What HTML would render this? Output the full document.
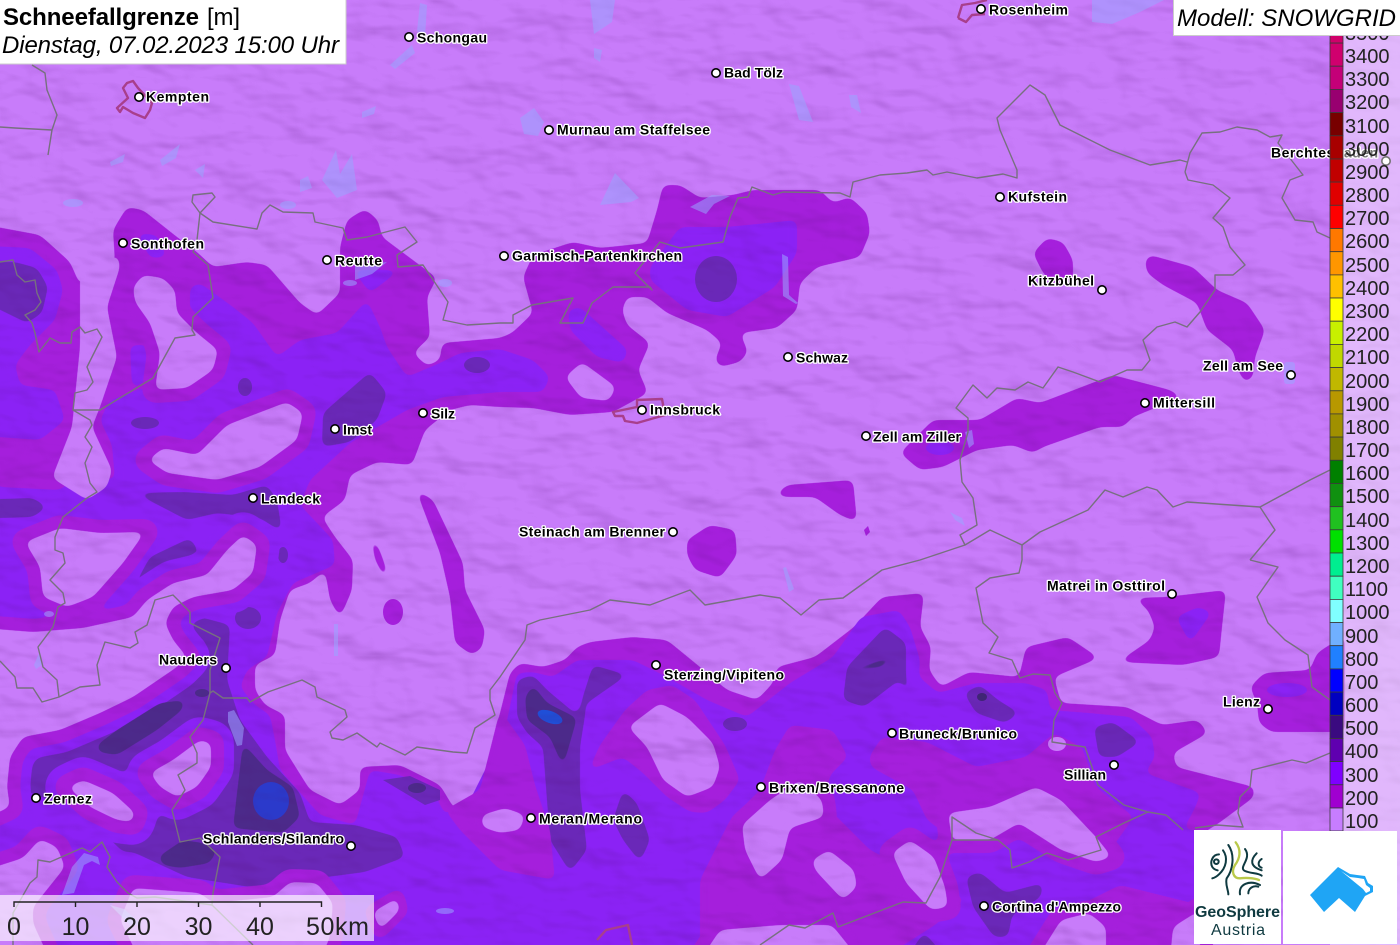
<!DOCTYPE html>
<html lang="de"><head><meta charset="utf-8"><title>Schneefallgrenze</title>
<style>
html,body{margin:0;padding:0;background:#c87cfa}
svg{display:block}
text{font-family:"Liberation Sans",sans-serif}
.l text{font-size:14px;font-weight:bold;fill:#000;stroke:#fff;stroke-width:2.6px;paint-order:stroke;stroke-linejoin:round}
.n text{font-size:20px;fill:#222}
.b{fill:none;stroke:#77707f;stroke-width:1.4;stroke-linejoin:round}
.w{fill:#9aa4ff;opacity:.55}
</style></head><body>
<svg width="1400" height="945" viewBox="0 0 1400 945" xmlns="http://www.w3.org/2000/svg">
<defs>
<filter id="s" filterUnits="userSpaceOnUse" x="-40" y="-40" width="1480" height="1025" color-interpolation-filters="sRGB">
<feGaussianBlur stdDeviation="4"/>
<feComponentTransfer><feFuncA type="linear" slope="14" intercept="-6.5"/></feComponentTransfer>
</filter>
<filter id="h" filterUnits="userSpaceOnUse" x="0" y="0" width="1400" height="945" color-interpolation-filters="sRGB">
<feTurbulence type="fractalNoise" baseFrequency="0.016 0.032" numOctaves="3" seed="7" result="t"/>
<feDiffuseLighting in="t" surfaceScale="5" diffuseConstant="1" lighting-color="#fff"><feDistantLight azimuth="135" elevation="60"/></feDiffuseLighting>
<feColorMatrix values="0 0 0 0 .3 0 0 0 0 .05 0 0 0 0 .42 -.6 0 0 0 .535"/>
</filter>
<polygon id="tongue" points="80,270 118,255 120,267 107,307 117,357 100,407 92,427 112,470 107,487 87,500 52,478 72,427 80,347"/>
<polygon id="h2" points="133,287 143,275 163,278 175,290 177,313 197,333 218,350 213,370 187,388 155,390 160,353 150,323 135,302"/>
<polygon id="h3" points="148,460 163,448 197,455 227,425 287,402 303,413 297,440 260,467 217,480 167,473"/>
<polygon id="sw" points="-30,627 33,632 83,628 133,617 147,600 173,583 207,575 227,550 243,535 257,545 253,573 233,590 193,597 173,607 165,623 173,640 187,657 177,667 133,697 100,713 60,730 23,737 10,757 7,787 10,807 -30,825"/>
<polygon id="sw2" points="25,542 60,528 100,533 145,532 123,563 93,597 67,607 43,597 40,567"/>
<polygon id="p1" points="150,773 173,760 200,740 211,743 211,767 197,787 177,797 160,787"/>
<polygon id="p2" points="68,787 83,780 113,793 135,813 132,822 117,820 90,807"/>
<polygon id="p3" points="-30,875 23,858 40,839 57,847 65,867 33,907 33,923 50,960 -30,960"/>
<polygon id="p4" points="133,888 200,893 213,903 273,897 290,882 317,883 333,903 330,937 320,960 140,960 120,920"/>
<polygon id="p5" points="373,912 397,898 400,910 380,930"/>
<polygon id="p6" points="482,815 505,808 525,815 520,830 500,833 482,827"/>
<polygon id="p7" points="628,727 660,703 687,717 713,743 720,767 713,787 687,797 663,780 647,747"/>
<polygon id="p8" points="742,825 770,800 800,780 822,800 824,817 790,828 782,860 760,880 745,850"/>
<polygon id="p9" points="948,813 990,807 1036,787 1061,800 1096,837 1112,857 1096,862 1061,850 1019,823 990,840 952,840"/>
<polygon id="p10" points="892,853 910,840 934,857 945,887 948,907 931,910 906,883"/>
<polygon id="p11" points="812,860 829,850 854,870 857,887 843,900 815,870"/>
<polygon id="p12" points="1036,960 1061,920 1089,913 1106,927 1106,960"/>
<polygon id="p13" points="700,960 720,930 780,925 832,925 860,960"/>
<polygon id="p14" points="1170,960 1173,927 1200,910 1200,960"/>
</defs>

<rect width="1400" height="945" fill="#c87cfa"/>

<!-- level 200 -->
<g filter="url(#s)" fill="#a51fdc">
<polygon points="-30,222 40,235 70,262 80,285 115,262 113,230 127,207 143,210 177,237 197,252 213,267 247,262 267,265 300,303 317,315 340,293 340,247 347,220 365,209 378,220 382,237 437,278 427,297 430,337 413,353 427,366 440,360 442,343 500,338 512,333 533,313 523,277 533,255 573,242 600,248 647,243 657,210 663,185 680,185 700,198 733,195 753,190 820,190 833,203 850,197 867,213 870,233 860,257 817,267 800,283 797,310 777,328 740,333 748,352 740,362 720,367 715,360 722,343 707,330 667,313 647,297 627,297 622,310 627,325 650,343 638,370 648,393 613,412 570,415 533,408 500,407 470,405 450,410 425,430 412,465 377,462 350,475 345,500 322,517 335,537 353,560 352,590 340,618 330,600 325,570 310,583 290,590 280,620 275,655 255,665 255,690 265,705 285,715 285,750 310,790 340,805 360,790 360,767 400,765 440,785 455,810 480,790 500,713 510,673 520,663 543,667 565,660 577,647 590,642 633,637 667,640 700,667 727,690 757,700 773,683 777,667 815,657 854,627 882,597 924,593 920,627 931,647 929,670 941,687 969,672 1019,677 1026,647 1068,637 1099,658 1054,677 1061,703 1127,707 1162,725 1198,720 1208,733 1173,753 1176,767 1254,787 1254,797 1219,823 1200,835 1200,960 -30,960"/>
<polygon points="1145,260 1150,255 1193,267 1217,290 1247,303 1265,330 1255,357 1253,377 1245,383 1238,370 1233,350 1207,330 1197,303 1163,285 1147,273"/>
<polygon points="1033,253 1047,238 1063,242 1073,260 1073,280 1057,288 1043,273"/>
<polygon points="900,453 933,420 980,420 1017,398 1040,403 1113,375 1170,390 1182,397 1133,417 1123,427 1100,427 1043,447 1033,453 1013,445 977,450 943,467 920,470"/>
<polygon points="775,495 787,485 853,480 857,522 840,515 815,497 785,497"/>
<polygon points="687,540 710,525 735,530 737,555 720,578 695,570 687,555"/>
<polygon points="413,482 417,490 433,500 463,563 465,590 485,630 482,648 472,655 455,643 450,597 440,553"/>
<polygon points="370,537 378,545 387,570 385,580 375,560"/>
<polygon points="1134,598 1166,597 1226,590 1222,627 1219,657 1183,665 1118,662 1150,640 1155,627 1148,610"/>
<polygon points="1250,687 1264,673 1310,670 1317,653 1345,635 1345,732 1271,732 1259,723 1257,703"/>
</g>
<ellipse cx="393" cy="612" rx="10" ry="13" fill="#a51fdc"/>
<polygon points="864,530 868,526 870,532 866,536" fill="#a51fdc"/>

<!-- level 300 -->
<g filter="url(#s)" fill="#8b22f5">
<polygon points="190,287 200,283 233,307 253,323 277,357 300,340 337,333 367,300 380,327 387,347 407,377 440,363 460,353 500,349 533,360 550,377 543,392 500,392 443,397 407,410 350,443 310,480 300,505 333,540 335,565 293,583 277,613 267,657 247,670 240,687 255,705 270,715 275,740 280,770 320,815 355,825 370,770 400,775 433,790 445,815 470,800 505,730 517,673 533,672 553,677 577,660 633,660 667,677 707,700 747,717 790,683 833,657 861,617 899,610 910,627 920,660 919,677 938,693 976,683 1026,683 1047,690 1050,710 1089,713 1131,717 1152,737 1155,757 1145,773 1201,793 1194,810 1183,830 1200,830 1200,960 -30,960 -30,470 0,487 60,490 80,475 115,480 112,445 100,420 110,400 140,390 160,385 195,380 190,340"/>
<polygon points="-30,245 30,248 57,270 63,290 55,320 30,345 15,365 20,385 55,390 65,420 40,440 -30,435"/>
<polygon points="650,267 680,227 727,227 797,220 797,253 775,287 727,317 687,310 650,280"/>
<polygon points="568,310 580,307 628,350 623,363 597,357 570,330"/>
<polygon points="353,270 400,270 370,293"/>
<polygon points="137,233 157,235 167,257 150,258"/>
<polygon points="130,345 148,345 150,378 132,388"/>
<polygon points="1176,617 1198,607 1212,612 1190,643"/>
</g>
<ellipse cx="1287" cy="690" rx="20" ry="7" fill="#8b22f5"/>
<ellipse cx="940" cy="448" rx="14" ry="7" fill="#8b22f5"/>

<!-- level 400 -->
<g filter="url(#s)" fill="#6a28b8">
<polygon points="-30,262 15,262 37,268 48,287 42,313 27,323 -30,295"/>
<polygon points="135,493 183,492 233,495 267,485 277,500 282,532 260,518 217,513 187,520"/>
<polygon points="-30,500 33,498 47,507 33,517 -30,519"/>
<polygon points="323,413 370,372 387,393 377,420 350,442 322,447"/>
<polygon points="132,590 150,557 190,538 198,550 190,567 140,583"/>
<polygon points="185,625 200,617 230,625 227,680 240,720 267,757 300,793 310,822 355,825 397,837 405,857 365,872 250,887 187,877 133,852 123,852 83,813 23,790 25,767 33,750 97,733 130,715 187,682 200,667 207,643"/>
<polygon points="517,680 533,675 547,690 577,715 593,665 627,675 610,687 587,703 580,747 580,790 587,850 570,872 550,840 543,747 527,733 517,717"/>
<polygon points="613,820 623,790 637,803 650,840 640,862 623,840"/>
<polygon points="843,700 847,667 885,627 906,643 906,677 912,698 899,680 864,707"/>
<polygon points="964,693 980,685 998,700 1019,713 1005,723 976,713"/>
<polygon points="1094,727 1113,722 1140,742 1117,757 1099,757"/>
<polygon points="966,877 980,872 1005,893 1043,883 1041,897 1012,915 1008,937 994,937 973,907"/>
<polygon points="905,960 924,932 948,960"/>
</g>
<ellipse cx="245" cy="387" rx="7" ry="9" fill="#6a28b8"/>
<ellipse cx="145" cy="423" rx="14" ry="6" fill="#6a28b8"/>
<ellipse cx="477" cy="365" rx="13" ry="8" fill="#6a28b8"/>
<ellipse cx="283" cy="555" rx="5" ry="8" fill="#6a28b8"/>
<ellipse cx="248" cy="618" rx="13" ry="11" fill="#6a28b8"/>
<ellipse cx="735" cy="724" rx="12" ry="7" fill="#6a28b8"/>
<ellipse cx="716" cy="279" rx="21" ry="23" fill="#6a28b8"/>

<!-- rings of 300 around holes, over 400 -->
<g filter="url(#s)" fill="#8b22f5" stroke="#8b22f5" stroke-width="46" stroke-linejoin="round">
<use href="#sw"/><use href="#p1"/><use href="#p2"/><use href="#p3"/>
</g>

<!-- level 500 / 600 -->
<g filter="url(#s)" fill="#4c2a8a">
<polygon points="97,745 117,730 160,703 185,700 182,710 157,730 117,755 98,752"/>
<polygon points="158,857 183,840 203,843 217,850 210,863 180,868 163,865"/>
<polygon points="243,743 267,770 293,787 300,817 283,833 233,828 237,793"/>
<polygon points="525,697 533,685 547,703 577,718 563,767 550,737 527,720"/>
<polygon points="847,670 898,655 882,667 854,672"/>
</g>
<ellipse cx="202" cy="693" rx="7" ry="4" fill="#4c2a8a"/>
<ellipse cx="982" cy="697" rx="5" ry="4" fill="#3f2675"/>
<polygon points="383,780 410,776 440,790 440,800 425,805" fill="#6a28b8"/>
<ellipse cx="417" cy="788" rx="9" ry="5" fill="#4c2a8a"/>
<ellipse cx="271" cy="801" rx="18" ry="19" fill="#2b3acb"/>
<ellipse cx="550" cy="717" rx="13" ry="6" fill="#1f4fd8" transform="rotate(20 550 717)"/>

<!-- local 200 zones over 300/400 -->
<g filter="url(#s)" fill="#a51fdc">
<polygon points="869,757 882,737 927,742 976,767 1026,757 1054,733 1082,747 1096,787 1134,817 1096,870 1070,860 1026,787 948,813 945,833 927,820 913,790 871,767"/>
<polygon points="770,800 830,810 870,850 950,890 965,900 935,925 880,960 740,960 730,880"/>
<polygon points="1120,885 1200,905 1200,960 1040,960 1060,915"/>
<polygon points="590,767 600,745 625,710 647,690 672,685 695,700 725,745 740,780 725,800 707,813 690,812 667,797 643,773 623,757 590,770"/>
<polygon points="730,820 760,790 775,750 790,725 833,730 848,757 830,775 825,800 785,830 780,870 800,900 700,960 700,880"/>
<polygon points="500,710 525,745 535,785 550,830 555,880 500,870 460,830 445,810 480,790"/>
<polygon points="14,440 80,470 40,487 -30,480 -30,440"/>
</g>
<g filter="url(#s)" fill="#a51fdc" stroke="#a51fdc" stroke-width="26" stroke-linejoin="round">
<use href="#h2"/><use href="#h3"/><use href="#sw"/><use href="#sw2"/><use href="#p1"/><use href="#p2"/><use href="#p3"/><use href="#p4"/><use href="#p5" stroke-width="16"/><use href="#p6" stroke-width="16"/><use href="#p8"/><use href="#p9"/><use href="#p10"/><use href="#p11"/><use href="#p12"/><use href="#p13"/><use href="#p14"/>
</g>

<!-- uncoloured (below 200) holes -->
<g filter="url(#s)" fill="#c87cfa">
<use href="#tongue"/><use href="#h2"/><use href="#h3"/><use href="#sw"/><use href="#sw2"/>
<use href="#p1"/><use href="#p2"/><use href="#p3"/><use href="#p4"/><use href="#p5"/><use href="#p6"/><use href="#p7"/><use href="#p8"/><use href="#p9"/><use href="#p10"/><use href="#p11"/><use href="#p12"/><use href="#p13"/><use href="#p14"/>
<polygon points="565,377 582,362 616,387 609,401 581,398"/>
</g>
<ellipse cx="1057" cy="744" rx="9" ry="7" fill="#c87cfa"/>

<!-- relief -->
<rect width="1400" height="945" filter="url(#h)"/>

<!-- water -->
<g class="w">
<path d="M590,0h25l-3,22l-18,12z"/><path d="M594,48l8,2l-2,12l-6,-4z"/><path d="M420,3l7,2l-2,32l-8,-6z"/><path d="M390,65l22,-20l3,8l-20,16z"/>
<path d="M520,118l14,-10l10,14l-6,14l-14,-2z"/><path d="M600,205l15,-32l24,25l-8,4z"/><path d="M789,84l10,2l14,36l-14,-2z"/><path d="M849,95h8l4,18l-10,-6z"/>
<path d="M322,180l14,-30l4,24l12,-20l5,36l-20,8z"/><path d="M300,180l8,-4l4,12l-12,4z"/><path d="M160,160l20,-16l-4,14l-14,8z"/><path d="M110,162l15,-8l-2,8l-12,4z"/><path d="M362,112l14,-6l-2,8l-12,4z"/><path d="M195,170l10,-6l-2,14z"/>
<ellipse cx="73" cy="203" rx="10" ry="4"/><ellipse cx="288" cy="205" rx="8" ry="4"/><path d="M355,266l32,-4l-15,12l-17,6z"/><ellipse cx="350" cy="283" rx="7" ry="3"/><ellipse cx="445" cy="283" rx="7" ry="4"/>
<path d="M690,207l22,-12l18,1l-16,8l-8,10z"/><path d="M782,254l6,3l1,38l9,8l-2,1l-13,-8z"/>
<path d="M1092,0h72l-24,12l-28,12l-20,-2z"/><path d="M228,712l6,-2l10,18l-2,17l-5,1l-9,-24z"/><rect x="1284" y="362" width="11" height="22" rx="3"/><rect x="334" y="624" width="4" height="32"/>
<ellipse cx="49" cy="614" rx="5" ry="3"/><path d="M34,665l6,-14l2,14l-6,4z"/><path d="M783,568l3,-1l8,22l-5,3z"/><path d="M965,432l7,-2l2,14l-5,4z"/><path d="M950,512l12,6l3,8l-10,-6z"/>
<path d="M62,895l10,-28l12,-14l14,4l2,8l-8,-4l-8,4l-10,28z"/><path d="M110,905l14,4l18,16l-12,0z"/><ellipse cx="445" cy="911" rx="9" ry="3"/>
</g>

<!-- borders -->
<g class="b">
<polyline points="32,65 45,73 47,90 57,115 52,130 48,155"/><polyline points="0,127 15,128 52,130"/>
<polyline points="0,262 13,260 17,275 25,282 35,280 37,293 41,302 35,310 25,315 32,323 35,333 39,352 50,338 60,343 71,343 72,332 80,327 85,333 97,329 102,337 87,367 93,382 87,390 75,393 73,410 90,420 92,425 85,437 92,447 85,463 90,483 97,492 87,498 63,517 55,537 55,550 63,553 65,563 50,580 63,593 65,603 58,607 53,627 38,647 43,667 57,680 59,697 42,702 33,688 17,688 15,677 0,661"/>
<polyline points="59,697 80,687 100,685 97,665 105,642 130,648 138,643 135,632 147,625 155,600 173,595 190,612 190,623 220,638 210,670 210,693 213,691 223,698 247,698 250,702 268,692 302,680 315,687 317,697 345,710 347,717 330,732 332,738 343,740 357,733 377,747 380,743 405,755 417,747 453,752 467,753 475,728 495,715 490,700 490,690 500,677 525,640 527,625 540,620 590,610 610,600 650,605 690,590 705,605 760,595 780,598 801,615 819,600 843,598 882,570 920,560 965,545 990,530 1022,545 1022,560 1019,573 990,578 976,588 983,623 998,637 989,653 1012,660 1020,678 1033,674 1050,675 1055,693 1062,703 1054,720 1052,742 1085,747 1092,767 1098,785 1124,805 1148,812 1166,815 1183,830"/>
<polyline points="1148,812 1124,823 1096,837 1101,850 1068,860 1047,853 1029,862 1012,868 1010,850 998,840 952,840 952,817 976,833 998,840"/><polyline points="952,840 940,877 926,903 903,902 838,927 833,913 805,928 789,925 760,945"/>
<polyline points="1250,560 1278,567 1257,597 1268,623 1285,640 1308,655 1312,687 1330,700"/>
<polyline points="1330,753 1306,763 1292,760 1252,770 1250,787 1240,797 1238,813 1243,827 1217,825 1195,828"/>
<polyline points="500,323 513,323 513,315 532,305 573,298 560,323 583,323 592,303 613,287 650,287 652,290 635,273 660,242 680,248 723,242 730,217 738,198 748,197 752,187 773,195 783,192 840,193 850,197 853,182 880,175 907,173 927,170 933,175 947,172 977,178 1003,174 1017,178 1017,170 1000,130 997,118 1030,85 1045,95 1060,125 1110,150 1150,165 1180,160 1187,162"/>
<polyline points="1185,172 1190,153 1202,133 1220,132 1237,127 1257,130 1270,137 1282,135 1278,143 1303,175 1290,180 1282,198 1295,220 1313,222 1317,232 1330,238"/>
<polyline points="1185,172 1188,180 1213,185 1230,198 1213,218 1223,227 1230,247 1245,265 1233,275 1215,275 1215,290 1200,312 1187,327 1175,322 1157,327 1143,340 1150,360 1142,370 1127,370 1100,382 1073,372 1058,367 1043,388 1028,382 1015,390 997,388 987,398 973,385 956,408 968,418 968,432 960,460 962,482 973,498 977,525 960,535 965,545"/>
<polyline points="1022,545 1040,532 1088,510 1105,490 1123,497 1147,487 1157,490 1173,507 1187,502 1260,507 1310,480 1330,470"/>
<polyline points="1250,560 1275,530 1260,507"/>
<polyline points="200,213 192,202 193,195 212,193 215,197 200,213 213,222 257,229 262,213 270,205 283,212 313,213 315,222 343,228 347,240 367,237 382,233 405,227 417,242 397,255 398,267 423,265 448,302 443,320 467,325 500,323"/>
<polyline points="200,213 197,240 193,252 208,265 213,298 193,317 192,330 195,335 175,338 153,378 100,410 73,410"/>
<polyline points="210,693 203,720 190,737 197,753 197,763 178,775 185,790 172,810 180,842 200,838 220,857 213,893 212,905 253,945"/>
<polyline points="212,905 155,897 137,898 128,893 117,882 107,867 110,857 102,842 90,852 82,848 50,862 38,860 37,877 30,883 13,913 13,945"/>
</g>

<!-- city outlines -->
<g fill="none" stroke="#a83f8c" stroke-width="2.4" stroke-linejoin="round">
<polygon points="117,108 128,98 123,88 127,83 133,81 138,88 152,103 150,110 145,118 133,113 123,107 120,112"/>
<polygon points="613,412 637,407 637,400 662,399 665,415 637,423 625,421 623,416 615,416"/>
<polyline points="958,18 962,5 975,3 987,0"/><polyline points="958,18 966,22 972,15 985,14"/>
<polyline points="597,940 606,930 628,925 632,945"/>
</g>

<!-- city labels -->
<g class="l">
<text x="1271" y="157.500" textLength="107">Berchtesgaden</text>
<text x="417" y="42.500" textLength="70">Schongau</text>
<text x="989" y="14.500" textLength="79">Rosenheim</text>
<text x="724" y="77.500" textLength="59">Bad Tölz</text>
<text x="146" y="101.500" textLength="63">Kempten</text>
<text x="557" y="134.500" textLength="153">Murnau am Staffelsee</text>
<text x="1008" y="201.500" textLength="59">Kufstein</text>
<text x="131" y="248.500" textLength="73">Sonthofen</text>
<text x="335" y="265.500" textLength="47">Reutte</text>
<text x="512" y="260.500" textLength="170">Garmisch-Partenkirchen</text>
<text x="1028" y="285.500" textLength="66">Kitzbühel</text>
<text x="1203" y="370.500" textLength="80">Zell am See</text>
<text x="796" y="362.500" textLength="52">Schwaz</text>
<text x="1153" y="407.500" textLength="62">Mittersill</text>
<text x="650" y="414.500" textLength="70">Innsbruck</text>
<text x="431" y="418.500" textLength="24">Silz</text>
<text x="343" y="434.500" textLength="29">Imst</text>
<text x="873" y="441.500" textLength="88">Zell am Ziller</text>
<text x="261" y="503.500" textLength="59">Landeck</text>
<text x="519" y="536.500" textLength="146">Steinach am Brenner</text>
<text x="1047" y="590.500" textLength="118">Matrei in Osttirol</text>
<text x="159" y="664.500" textLength="58">Nauders</text>
<text x="664" y="679.500" textLength="120">Sterzing/Vipiteno</text>
<text x="1223" y="706.500" textLength="37">Lienz</text>
<text x="899" y="738.500" textLength="118">Bruneck/Brunico</text>
<text x="769" y="792.500" textLength="135">Brixen/Bressanone</text>
<text x="1064" y="779.500" textLength="42">Sillian</text>
<text x="539" y="823.500" textLength="103">Meran/Merano</text>
<text x="203" y="843.500" textLength="141">Schlanders/Silandro</text>
<text x="44" y="803.500" textLength="48">Zernez</text>
<text x="992" y="911.500" textLength="129">Cortina d'Ampezzo</text>
</g>
<g fill="#fff" stroke="#000" stroke-width="1.6">
<circle cx="409" cy="37" r="4.200"/><circle cx="981" cy="9" r="4.200"/><circle cx="716" cy="73" r="4.200"/><circle cx="139" cy="97" r="4.200"/><circle cx="549" cy="130" r="4.200"/><circle cx="1000" cy="197" r="4.200"/><circle cx="123" cy="243" r="4.200"/><circle cx="327" cy="260" r="4.200"/><circle cx="504" cy="256" r="4.200"/><circle cx="1102" cy="290" r="4.200"/><circle cx="1291" cy="375" r="4.200"/><circle cx="788" cy="357" r="4.200"/><circle cx="1145" cy="403" r="4.200"/><circle cx="642" cy="410" r="4.200"/><circle cx="423" cy="413" r="4.200"/><circle cx="335" cy="429" r="4.200"/><circle cx="866" cy="436" r="4.200"/><circle cx="253" cy="498" r="4.200"/><circle cx="673" cy="532" r="4.200"/><circle cx="1172" cy="594" r="4.200"/><circle cx="226" cy="668" r="4.200"/><circle cx="656" cy="665" r="4.200"/><circle cx="1268" cy="709" r="4.200"/><circle cx="892" cy="733" r="4.200"/><circle cx="761" cy="787" r="4.200"/><circle cx="1114" cy="765" r="4.200"/><circle cx="531" cy="818" r="4.200"/><circle cx="351" cy="846" r="4.200"/><circle cx="36" cy="798" r="4.200"/><circle cx="984" cy="906" r="4.200"/><circle cx="1386" cy="161" r="4.200"/>
</g>

<!-- legend -->
<rect x="1330" y="36" width="70" height="909" fill="#fff" fill-opacity=".45"/>
<g stroke="#3a3a3a" stroke-width=".8">
<rect x="1330" y="19.900" width="13" height="23.200" fill="#d0006a"/>
<rect x="1330" y="43.100" width="13" height="23.100" fill="#d0006e"/>
<rect x="1330" y="66.200" width="13" height="23.200" fill="#c40078"/>
<rect x="1330" y="89.400" width="13" height="23.200" fill="#980070"/>
<rect x="1330" y="112.600" width="13" height="23.200" fill="#780000"/>
<rect x="1330" y="135.800" width="13" height="23.200" fill="#a80000"/>
<rect x="1330" y="159" width="13" height="23.100" fill="#c00000"/>
<rect x="1330" y="182.100" width="13" height="23.200" fill="#e00000"/>
<rect x="1330" y="205.300" width="13" height="23.200" fill="#ff0000"/>
<rect x="1330" y="228.500" width="13" height="23.200" fill="#ff7800"/>
<rect x="1330" y="251.700" width="13" height="23.200" fill="#ff9600"/>
<rect x="1330" y="274.900" width="13" height="23.100" fill="#ffc000"/>
<rect x="1330" y="298" width="13" height="23.200" fill="#ffff00"/>
<rect x="1330" y="321.200" width="13" height="23.200" fill="#c8f000"/>
<rect x="1330" y="344.400" width="13" height="23.200" fill="#c0d800"/>
<rect x="1330" y="367.600" width="13" height="23.200" fill="#c0b800"/>
<rect x="1330" y="390.800" width="13" height="23.100" fill="#b89800"/>
<rect x="1330" y="413.900" width="13" height="23.200" fill="#a09000"/>
<rect x="1330" y="437.100" width="13" height="23.200" fill="#808000"/>
<rect x="1330" y="460.300" width="13" height="23.200" fill="#008000"/>
<rect x="1330" y="483.500" width="13" height="23.200" fill="#109010"/>
<rect x="1330" y="506.700" width="13" height="23.100" fill="#20c020"/>
<rect x="1330" y="529.800" width="13" height="23.200" fill="#00e000"/>
<rect x="1330" y="553" width="13" height="23.200" fill="#00ee90"/>
<rect x="1330" y="576.200" width="13" height="23.200" fill="#40ffc0"/>
<rect x="1330" y="599.400" width="13" height="23.200" fill="#80ffff"/>
<rect x="1330" y="622.600" width="13" height="23.100" fill="#70b0ff"/>
<rect x="1330" y="645.700" width="13" height="23.200" fill="#2080ff"/>
<rect x="1330" y="668.900" width="13" height="23.200" fill="#0000ff"/>
<rect x="1330" y="692.100" width="13" height="23.200" fill="#0000c0"/>
<rect x="1330" y="715.300" width="13" height="23.200" fill="#3a0a80"/>
<rect x="1330" y="738.500" width="13" height="23.100" fill="#5f00b0"/>
<rect x="1330" y="761.600" width="13" height="23.200" fill="#7f00ff"/>
<rect x="1330" y="784.800" width="13" height="23.200" fill="#a000d0"/>
<rect x="1330" y="808" width="13" height="23" fill="#c77dff"/>
</g>
<g class="n">
<text x="1345" y="40">3500</text><text x="1345" y="63">3400</text><text x="1345" y="86">3300</text><text x="1345" y="109">3200</text><text x="1345" y="133">3100</text><text x="1345" y="156">3000</text><text x="1345" y="179">2900</text><text x="1345" y="202">2800</text><text x="1345" y="225">2700</text><text x="1345" y="248">2600</text><text x="1345" y="272">2500</text><text x="1345" y="295">2400</text><text x="1345" y="318">2300</text><text x="1345" y="341">2200</text><text x="1345" y="364">2100</text><text x="1345" y="388">2000</text><text x="1345" y="411">1900</text><text x="1345" y="434">1800</text><text x="1345" y="457">1700</text><text x="1345" y="480">1600</text><text x="1345" y="503">1500</text><text x="1345" y="527">1400</text><text x="1345" y="550">1300</text><text x="1345" y="573">1200</text><text x="1345" y="596">1100</text><text x="1345" y="619">1000</text><text x="1345" y="643">900</text><text x="1345" y="666">800</text><text x="1345" y="689">700</text><text x="1345" y="712">600</text><text x="1345" y="735">500</text><text x="1345" y="758">400</text><text x="1345" y="782">300</text><text x="1345" y="805">200</text><text x="1345" y="828">100</text>
</g>

<!-- title -->
<rect x="-1" y="-1" width="347" height="65" fill="#fff" stroke="#ccc"/>
<text x="3" y="25" font-size="24" font-weight="bold" fill="#000" textLength="196">Schneefallgrenze</text>
<text x="207" y="25" font-size="24" fill="#000" textLength="33">[m]</text>
<text x="2" y="53" font-size="24" font-style="italic" fill="#000" textLength="337">Dienstag, 07.02.2023 15:00 Uhr</text>
<rect x="1173.500" y="-1" width="228" height="36.500" fill="#fff" stroke="#ccc"/>
<text x="1177" y="26" font-size="24" font-style="italic" fill="#000" textLength="219">Modell: SNOWGRID</text>

<!-- scale bar -->
<rect x="0" y="895" width="374" height="46" fill="#fff" fill-opacity=".65"/>
<path d="M14,907V902H321.500V907M75.500,902V907M137,902V907M198.500,902V907M260,902V907" fill="none" stroke="#222" stroke-width="1.4"/>
<g font-size="25" fill="#222" text-anchor="middle">
<text x="14" y="935">0</text><text x="75.500" y="935">10</text><text x="137" y="935">20</text><text x="198.500" y="935">30</text><text x="260" y="935">40</text>
</g>
<text x="306" y="935" font-size="25" fill="#222" textLength="63">50km</text>

<!-- logos -->
<rect x="1194" y="830" width="87" height="114" fill="#fff"/>
<rect x="1283" y="831" width="114" height="113" fill="#fff"/>
<g transform="translate(1195 835) scale(.3333)" fill="none" stroke="#0f3a40" stroke-width="6" stroke-linecap="round">
<circle cx="64" cy="80" r="7"/>
<path d="M72,58C52,58 44,82 52,96C56,102 62,105 68,106"/>
<path d="M84,46C100,68 94,98 72,118C66,124 60,128 52,130"/>
<path d="M100,30C122,62 112,108 95,130C90,148 100,165 100,178"/>
<path d="M150,42C172,72 128,98 150,108C168,116 190,113 200,122"/>
<path d="M185,55C165,75 165,95 200,106"/>
<path d="M200,72C186,82 190,95 200,98"/>
<path d="M135,178C130,146 165,135 195,150"/>
<path d="M160,175C160,160 175,150 190,155"/>
<path d="M122,22C140,45 135,70 120,90C108,110 115,130 135,130C150,128 175,128 192,135" stroke="#b9c94a" stroke-width="7"/>
</g>
<text x="1195" y="917" font-size="16" font-weight="bold" fill="#0f3a40" textLength="85">GeoSphere</text>
<text x="1211" y="935" font-size="16" fill="#0f3a40" textLength="54">Austria</text>
<path d="M1310,895L1338,867L1350,874L1357,875L1365,876L1368,883L1373,886L1373,892L1365,896L1355,912L1339,898L1324,912Z" fill="#1fa5f5"/>
<path d="M1341,871L1350,877L1358,878L1364,879L1366,885L1370,888L1370,891L1366,893L1363,889Z" fill="#fff"/>
</svg>
</body></html>
